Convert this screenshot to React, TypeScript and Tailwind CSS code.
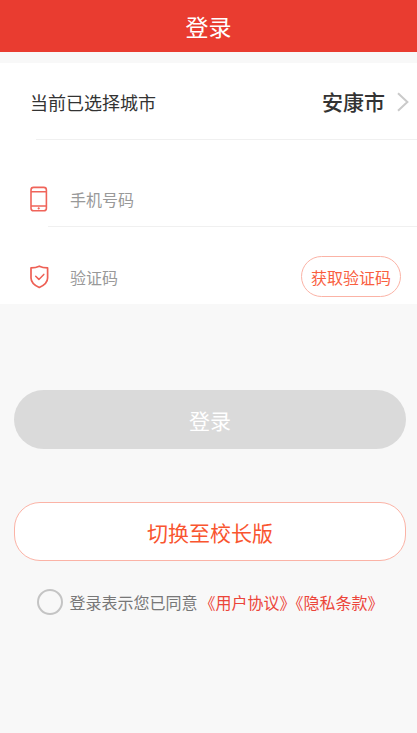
import { useState } from 'react';

function PhoneIcon() {
  return (
    <svg width="18" height="26" viewBox="0 0 18 26" fill="none" stroke="#f0645a" strokeWidth="1.6">
      <rect x="1" y="1.4" width="15.4" height="23.4" rx="2.6" />
      <path d="M1 5.8h15.4M1 20h15.4" strokeWidth="1.4" />
      <circle cx="8.7" cy="22.4" r="0.8" fill="#f0645a" strokeWidth="0.6" />
    </svg>
  );
}

function ShieldIcon() {
  return (
    <svg
      width="20"
      height="24"
      viewBox="0 0 20 24"
      fill="none"
      stroke="#ee6055"
      strokeWidth="1.7"
      strokeLinejoin="round"
      strokeLinecap="round"
    >
      <path d="M9.3 1.2C6.900 2.4 4 2.900 1 2.900v10c0 4.200 3.200 7.200 8.300 9.600 5.100-2.400 8.300-5.400 8.300-9.600v-10c-3 0-5.900-.5-8.300-1.700z" />
      <path d="M5.700 11.200l3.200 3.200 4.900-5" strokeWidth="1.5" />
    </svg>
  );
}

function ChevronIcon() {
  return (
    <svg width="12" height="20" viewBox="0 0 12 20" fill="none" stroke="#cacaca" strokeWidth="2">
      <path d="M1 1.200l9.400 8.800L1 18.800" />
    </svg>
  );
}

export default function App() {
  const [phone, setPhone] = useState('');
  const [code, setCode] = useState('');
  const [agreed, setAgreed] = useState(false);

  return (
    <div className="min-h-screen bg-[#f8f8f8] font-['Noto_Sans_CJK_SC',sans-serif] text-[#333]">
      <header className="flex h-13 items-center justify-center bg-[#e93c30]">
        <h1 className="text-[23px] leading-8 text-white">登录</h1>
      </header>

      <main>
        <section className="mt-[11px] bg-white">
          {/* City */}
          <button type="button" className="flex h-19 w-full items-center justify-between pt-[2px] pr-2 pl-[30px]">
            <span className="text-[18px]">当前已选择城市</span>
            <span className="flex items-center gap-3">
              <span className="text-[21px] font-medium">安康市</span>
              <ChevronIcon />
            </span>
          </button>
          <hr className="ml-9 border-[#f0f0f0]" />

          {/* Phone number */}
          <div className="flex h-[86px] items-center pt-8 pr-4 pl-[30px]">
            <label htmlFor="phone" aria-label="手机号码" className="w-10">
              <PhoneIcon />
            </label>
            <input
              id="phone"
              type="tel"
              value={phone}
              onChange={(e) => setPhone(e.target.value)}
              placeholder="手机号码"
              className="min-w-0 flex-1 text-[16px] outline-none placeholder:text-[#999]"
            />
          </div>
          <hr className="ml-12 border-[#f0f0f0]" />

          {/* Verification code */}
          <div className="flex h-[77px] items-center pt-[22px] pr-4 pl-[30px]">
            <label htmlFor="code" aria-label="验证码" className="w-10">
              <ShieldIcon />
            </label>
            <input
              id="code"
              inputMode="numeric"
              value={code}
              onChange={(e) => setCode(e.target.value)}
              placeholder="验证码"
              className="min-w-0 flex-1 text-[16px] outline-none placeholder:text-[#999]"
            />
            <button
              type="button"
              className="h-[41px] w-[100px] rounded-full border border-[#fbb3a6] text-[16px] text-[#f9603f]"
            >
              获取验证码
            </button>
          </div>
        </section>

        <div className="mt-[86px] flex flex-col gap-[53px] pr-[11px] pl-[14px]">
          <button type="submit" className="h-[59px] rounded-full bg-[#dadada] pt-[2px] text-[21px] text-white">
            登录
          </button>
          <button
            type="button"
            className="h-[59px] rounded-[26px] border border-[#fbb3a6] bg-white pt-[2px] text-[21px] text-[#f9552f]"
          >
            切换至校长版
          </button>
        </div>

        <div className="mt-7 flex items-center justify-center gap-[6px] pl-1 text-[16px]">
          <input
            id="agree"
            type="checkbox"
            checked={agreed}
            onChange={(e) => setAgreed(e.target.checked)}
            className="size-[26px] appearance-none rounded-full border-2 border-[#c4c4c4] checked:bg-[#e93c30]"
          />
          <p>
            <label htmlFor="agree" className="mr-[2px] text-[#777]">
              登录表示您已同意
            </label>
            <a href="#agreement" className="text-[#ec453a]">
              《用户协议》
            </a>
            <a href="#privacy" className="text-[#ec453a]">
              《隐私条款》
            </a>
          </p>
        </div>
      </main>
    </div>
  );
}
